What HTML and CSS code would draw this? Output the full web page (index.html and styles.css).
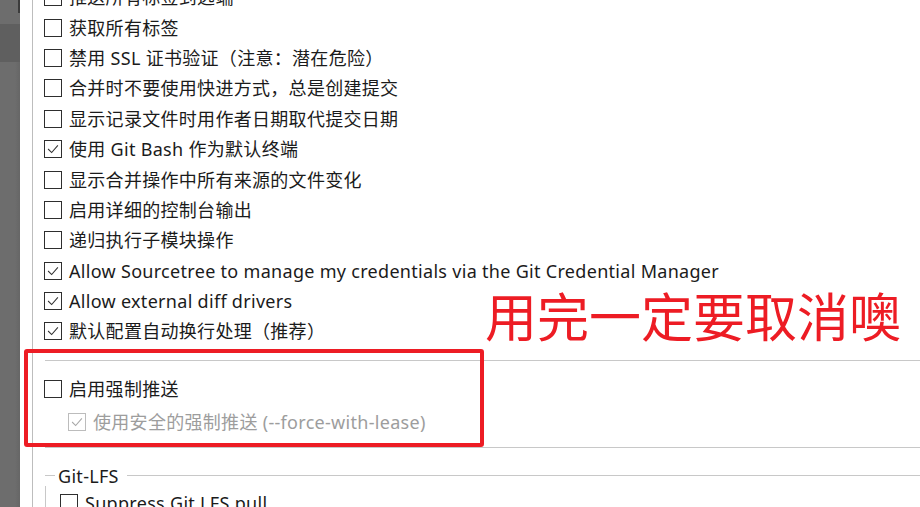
FILE: index.html
```html
<!DOCTYPE html>
<html lang="zh-CN">
<head>
<meta charset="utf-8">
<title>Sourcetree 设置</title>
<link rel="stylesheet" href="styles.css">
</head>
<body>
<div class="app">
  <div class="sidebar">
    <div class="sb-top"><span class="sb-mark"></span></div>
    <div class="sb-sel"></div>
    <div class="sb-rest"></div>
  </div>
  <div class="gutter"></div>
  <div class="panel">
    <div class="list">
      <div class="row"><span class="cb"></span><span class="label">推送所有标签到远端</span></div>
      <div class="row"><span class="cb"></span><span class="label">获取所有标签</span></div>
      <div class="row"><span class="cb"></span><span class="label">禁用 SSL 证书验证（注意：潜在危险）</span></div>
      <div class="row"><span class="cb"></span><span class="label">合并时不要使用快进方式，总是创建提交</span></div>
      <div class="row"><span class="cb"></span><span class="label">显示记录文件时用作者日期取代提交日期</span></div>
      <div class="row"><span class="cb checked"><svg viewBox="0 0 18 18"><polyline points="3.5,9 7.5,13 14.5,5"/></svg></span><span class="label">使用 Git Bash 作为默认终端</span></div>
      <div class="row"><span class="cb"></span><span class="label">显示合并操作中所有来源的文件变化</span></div>
      <div class="row"><span class="cb"></span><span class="label">启用详细的控制台输出</span></div>
      <div class="row"><span class="cb"></span><span class="label">递归执行子模块操作</span></div>
      <div class="row"><span class="cb checked"><svg viewBox="0 0 18 18"><polyline points="3.5,9 7.5,13 14.5,5"/></svg></span><span class="label">Allow Sourcetree to manage my credentials via the Git Credential Manager</span></div>
      <div class="row"><span class="cb checked"><svg viewBox="0 0 18 18"><polyline points="3.5,9 7.5,13 14.5,5"/></svg></span><span class="label">Allow external diff drivers</span></div>
      <div class="row"><span class="cb checked"><svg viewBox="0 0 18 18"><polyline points="3.5,9 7.5,13 14.5,5"/></svg></span><span class="label">默认配置自动换行处理（推荐）</span></div>
    </div>

    <div class="force-section">
      <div class="row"><span class="cb"></span><span class="label">启用强制推送</span></div>
      <div class="row sub disabled"><span class="cb checked"><svg viewBox="0 0 18 18"><polyline points="3.5,9 7.5,13 14.5,5"/></svg></span><span class="label">使用安全的强制推送 (--force-with-lease)</span></div>
    </div>

    <div class="group">
      <div class="group-head"><span class="group-title">Git-LFS</span></div>
      <div class="group-body">
        <div class="row"><span class="cb"></span><span class="label">Suppress Git LFS pull</span></div>
      </div>
    </div>
  </div>
</div>

<div class="mark-box"></div>
<div class="mark-note">用完一定要取消噢</div>
</body>
</html>
```

FILE: styles.css
```css
html, body {
  margin: 0;
  padding: 0;
  background: #ffffff;
  overflow: hidden;
}

body {
  width: 920px;
  height: 507px;
  position: relative;
  font-family: "Noto Sans", "Noto Sans CJK SC", sans-serif;
  font-size: 18px;
  color: #1b1b1b;
}

.app {
  display: flex;
  height: 507px;
}

.sidebar {
  width: 20px;
  flex: none;
  display: flex;
  flex-direction: column;
}

.sb-top {
  height: 24px;
  background: #6d6d6d;
  display: flex;
  justify-content: flex-end;
}

.sb-mark {
  width: 2px;
  height: 13px;
  background: #3c3c3c;
}

.sb-sel {
  height: 38px;
  background: #5f5f5f;
}

.sb-rest {
  flex: 1;
  background: linear-gradient(to right, #6d6d6d 0, #6d6d6d 15px, #666666 20px);
}

.gutter {
  width: 12px;
  flex: none;
}

.panel {
  flex: 1;
  border-left: 1px solid #bdbdbd;
  padding-left: 11px;
  overflow: hidden;
}

.list {
  margin-top: -18px;
}

.row {
  height: 30.4px;
  display: flex;
  align-items: center;
  white-space: nowrap;
}

.cb {
  width: 18px;
  height: 18px;
  box-sizing: border-box;
  border: 1px solid #2e2e2e;
  flex: none;
  display: flex;
  align-items: center;
  justify-content: center;
  background: #ffffff;
}

.cb svg {
  width: 16px;
  height: 16px;
}

.cb svg polyline {
  fill: none;
  stroke: #333333;
  stroke-width: 1.2;
}

.label {
  margin-left: 7px;
  line-height: 1;
  letter-spacing: 0.3px;
}

.force-section {
  margin-top: 13px;
  margin-left: 1px;
  border-top: 1px solid #c8c8c8;
  border-bottom: 1px solid #c8c8c8;
  height: 88px;
  box-sizing: border-box;
  padding-top: 13px;
}

.force-section .row {
  margin-left: -1px;
}

.force-section .row.sub {
  height: 36px;
  padding-left: 24px;
}

.disabled {
  color: #9d9d9d;
}

.disabled .cb {
  border-color: #bcbcbc;
}

.disabled .cb svg polyline {
  stroke: #a8a8a8;
}

.group {
  margin-top: 18px;
  margin-left: 1px;
}

.group-head {
  display: flex;
  align-items: center;
  height: 20px;
}

.group-head::before {
  content: "";
  width: 10px;
  height: 1px;
  background: #c8c8c8;
}

.group-head::after {
  content: "";
  flex: 1;
  height: 1px;
  background: #c8c8c8;
}

.group-title {
  padding: 0 8px 0 3px;
  line-height: 1;
  letter-spacing: 0.3px;
}

.group-body {
  border-left: 1px solid #c8c8c8;
  padding-left: 14px;
  padding-top: 6px;
}

.group-body .row {
  height: 22px;
}

.mark-box {
  position: absolute;
  left: 24px;
  top: 349px;
  width: 460px;
  height: 98px;
  box-sizing: border-box;
  border: 4px solid #ed1c24;
  border-radius: 3px;
}

.mark-note {
  position: absolute;
  left: 485px;
  top: 283px;
  font-family: "Noto Sans CJK SC", sans-serif;
  font-size: 52px;
  line-height: 64px;
  color: #ed1c24;
  white-space: nowrap;
}
```
